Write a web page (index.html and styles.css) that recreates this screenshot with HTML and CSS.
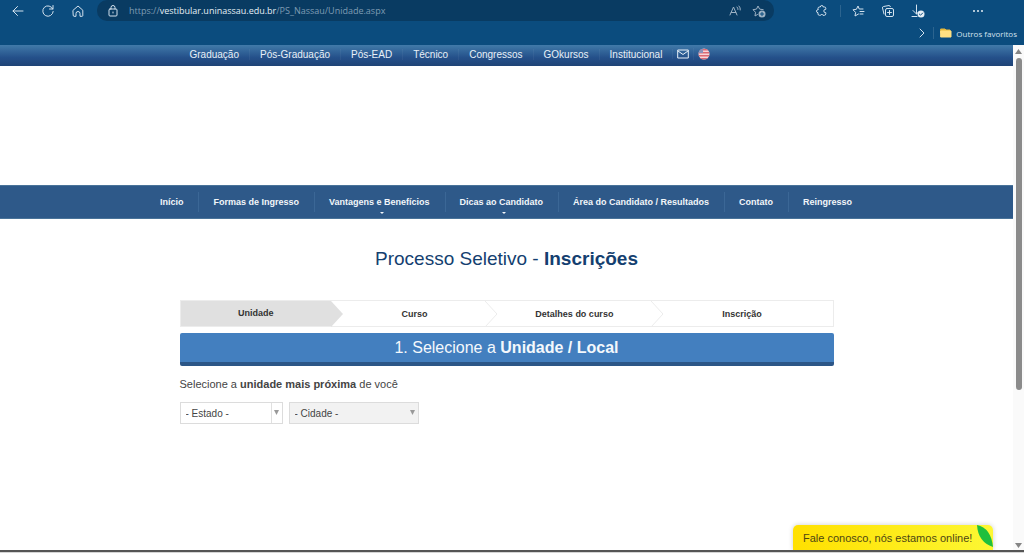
FILE: index.html
```html
<!DOCTYPE html>
<html lang="pt-BR">
<head>
<meta charset="utf-8">
<title>Processo Seletivo - Inscrições</title>
<link rel="stylesheet" href="styles.css">
</head>
<body>
<header class="browser">
  <div class="toolbar">
    <button class="tool back" aria-label="Voltar"><svg width="14" height="14" viewBox="0 0 14 14"><path d="M12 7H2M6.500 2.500 2 7l4.500 4.500"/></svg></button>
    <button class="tool reload" aria-label="Atualizar"><svg width="14" height="14" viewBox="0 0 14 14"><path d="M11.800 5A5.200 5.200 0 1 0 12.200 7.500M12 1.500V5H8.500"/></svg></button>
    <button class="tool home" aria-label="Início"><svg width="14" height="14" viewBox="0 0 14 14"><path d="M2.200 6.200 7 2l4.800 4.200v5.300q0 .8-.8.800H9V9.500a2 2 0 0 0-4 0v2.800H3q-.8 0-.8-.8z"/></svg></button>
    <div class="address">
      <svg class="lock" width="12" height="14" viewBox="0 0 12 14"><rect x="2" y="5" width="8" height="7" rx="1"/><path d="M4 5V3.500a2 2 0 0 1 4 0V5M6 8v1"/></svg>
      <span class="url">https://<b>vestibular.uninassau.edu.br</b>/PS_Nassau/Unidade.aspx</span>
      <button class="tool read" aria-label="Ler em voz alta"><svg width="14" height="14" viewBox="0 0 14 14"><path d="m2 11 3.500-8L9 11M3.200 8.500h4.600M9 3q1.200 1 1 2.500M11 2q1.700 1.700 1.300 4"/></svg></button>
      <button class="tool" aria-label="Favoritar"><svg width="14" height="14" viewBox="0 0 14 14"><path d="M5.500 10.500 3 12l.5-3.700L1 5.700l3.500-.6L6 2l1.600 3.100 3.600.6"/><circle class="fill" cx="10" cy="10" r="3.500"/><path class="cut" d="M8.300 10h3.400M10 8.300v3.400"/></svg></button>
    </div>
    <div class="extras">
      <button class="tool" aria-label="Extensões"><svg width="14" height="14" viewBox="0 0 14 14"><path d="M3 4.300q0-1.300 1.300-1.300h1q.1-1.500 1.500-1.500T8.300 3h1.200q1.300 0 1.300 1.300v1q-2-.1-2 1.700t2 1.700v1q0 1.600-1.400 1.600H8q0-.8-1.200-.8t-1.200.8H4.400Q3 11.300 3 9.900V8.700q-1.500-.1-1.500-1.600T3 5.500z"/></svg></button>
      <span class="divider"></span>
      <button class="tool" aria-label="Favoritos"><svg width="14" height="14" viewBox="0 0 14 14"><path d="M7.500 10 4 12l.6-3.600L2 5.800l3.400-.5L7 2l1.200 3H12M9 7.500h4M9 10h3"/></svg></button>
      <button class="tool" aria-label="Coleções"><svg width="14" height="14" viewBox="0 0 14 14"><rect x="4.500" y="4.500" width="8" height="8" rx="1.500"/><path d="M3 10 1.500 4q-.3-1.200 1-1.500L8 1.500q1 0 1.400 1.200M8.500 6.500v4M6.500 8.500h4"/></svg></button>
      <button class="tool" aria-label="Downloads"><svg width="14" height="14" viewBox="0 0 14 14"><path d="M5.500 1v9M2 6.500l3.500 3.500L8 7.500M1 12.500h5"/><circle class="fill" cx="10" cy="10" r="3.500"/><path class="cut" d="m8.300 10 1.200 1.200L11.700 9"/></svg></button>
      <button class="tool more" aria-label="Mais"><svg width="14" height="14" viewBox="0 0 14 14"><g class="fill"><circle cx="3" cy="7" r="1"/><circle cx="7" cy="7" r="1"/><circle cx="11" cy="7" r="1"/></g></svg></button>
    </div>
  </div>
  <div class="bookmarks">
    <button class="tool" aria-label="Mostrar mais"><svg width="10" height="10" viewBox="0 0 10 10"><path d="m3 1 4 4-4 4"/></svg></button>
    <span class="divider"></span>
    <button class="folder"><svg width="12" height="10" viewBox="0 0 12 10"><path class="tab" d="M1 1h4l1 1h4v3H1z"/><path class="pocket" d="M1 3h10v6H1z"/></svg>Outros favoritos</button>
  </div>
</header>
<div class="viewport">
  <div class="page">
    <nav class="topnav">
      <div class="container toplinks">
        <a href="#">Graduação</a><a href="#">Pós-Graduação</a><a href="#">Pós-EAD</a><a href="#">Técnico</a><a href="#">Congressos</a><a href="#">GOkursos</a><a href="#">Institucional</a>
        <a class="icon" href="#" aria-label="E-mail"><svg width="12" height="10" viewBox="0 0 12 10"><path d="M.7 1h10.600v8H.7zM1 2l5 3.500L11 2"/></svg></a>
        <a class="icon" href="#" aria-label="English"><svg width="12" height="12" viewBox="0 0 12 12"><clipPath id="disc"><circle cx="6" cy="6" r="5.500"/></clipPath><g clip-path="url(#disc)"><path class="white" d="M0 0h12v12H0z"/><path class="red" d="M0 1h12v1.400H0zM0 4h12v1.400H0zM0 7h12v1.400H0zM0 10h12v1.500H0z"/><path class="blue" d="M0 0h5v5H0z"/></g></svg></a>
      </div>
    </nav>
    <div class="banner"></div>
    <nav class="mainnav">
      <a href="#">Início</a><a href="#">Formas de Ingresso</a><a class="drop" href="#">Vantagens e Benefícios</a><a class="drop" href="#">Dicas ao Candidato</a><a href="#">Área do Candidato / Resultados</a><a href="#">Contato</a><a href="#">Reingresso</a>
    </nav>
    <main class="container">
      <h1 class="title">Processo Seletivo - <b>Inscrições</b></h1>
      <ol class="steps">
        <li class="current"><span>Unidade</span><svg width="13" height="26" viewBox="0 0 13 26"><path d="M0 0l12 13L0 26"/></svg></li>
        <li><span>Curso</span><svg width="13" height="26" viewBox="0 0 13 26"><path d="M0 0l12 13L0 26"/></svg></li>
        <li><span>Detalhes do curso</span><svg width="13" height="26" viewBox="0 0 13 26"><path d="M0 0l12 13L0 26"/></svg></li>
        <li class="last"><span>Inscrição</span></li>
      </ol>
      <h2 class="heading">1. Selecione a <b>Unidade / Local</b></h2>
      <form>
        <p class="hint">Selecione a <b>unidade mais próxima</b> de você</p>
        <div class="fields">
          <div class="field state"><select aria-label="Estado"><option>- Estado -</option></select><svg width="5" height="5" viewBox="0 0 5 5"><path d="M0 0h5L2.500 5z"/></svg></div>
          <div class="field city"><select aria-label="Cidade" disabled><option>- Cidade -</option></select><svg width="5" height="5" viewBox="0 0 5 5"><path d="M0 0h5L2.500 5z"/></svg></div>
        </div>
      </form>
    </main>
    <button class="chat">Fale conosco, nós estamos online!<svg width="16" height="22" viewBox="0 0 16 22"><path d="M0 0Q14 3 16 22 1 17 0 0z"/></svg></button>
  </div>
  <div class="scrollbar">
    <svg width="7" height="5" viewBox="0 0 7 5"><path d="M0 5 3.500 0 7 5z"/></svg>
    <div class="track"><div class="thumb"></div></div>
    <svg width="7" height="5" viewBox="0 0 7 5"><path d="M0 0h7L3.500 5z"/></svg>
  </div>
</div>
<footer class="edge"></footer>
</body>
</html>
```
FILE: styles.css
```css
* { box-sizing: border-box; }
body {
  margin: 0;
  height: 100vh;
  display: flex;
  flex-direction: column;
  background: #fff;
  font-family: "Liberation Sans", Arial, sans-serif;
  color: #333;
}
button { border: 0; padding: 0; background: none; color: inherit; font: inherit; }
a { color: inherit; text-decoration: none; }
svg { display: block; flex: none; }

.browser {
  height: 45px;
  flex: none;
  background: #0b4c7e;
  color: #d4e2ee;
  font-family: "Open Sans", "Noto Sans", sans-serif;
}
.browser svg { fill: none; stroke: currentColor; stroke-width: 1; stroke-linecap: round; stroke-linejoin: round; }
.browser .fill { fill: #e6eef5; stroke: none; }
.browser .cut { stroke: #0b4c7e; }
.toolbar { display: flex; height: 21px; align-items: center; padding-left: 11px; }
.tool { flex: none; }
.reload, .home { margin-left: 16px; }
.address {
  flex: 1;
  display: flex;
  align-items: center;
  height: 21px;
  margin-left: 12px;
  padding: 0 8px 0 10px;
  background: #093b62;
  border-radius: 10px;
  color: #9fb3c5;
  font-size: 9px;
}
.url { flex: 1; margin-left: 10px; color: #7f9bb3; white-space: nowrap; }
.url b { font-weight: 400; color: #e6eef5; }
.lock { color: #d4e2ee; }
.read { margin-right: 10px; }
.address .fill { fill: #9fb3c5; }
.extras { display: flex; align-items: center; gap: 16px; width: 250px; padding-left: 41px; }
.divider { width: 1px; height: 12px; background: #2c648f; }
.extras .divider { margin: 0 -6px 0 -5px; }
.more { margin-left: 30px; }
.bookmarks { display: flex; align-items: center; justify-content: flex-end; gap: 6px; height: 24px; padding-right: 7px; }
.folder { display: flex; align-items: center; gap: 4px; font-size: 8px; }
.browser .tab { fill: #e8b93a; stroke: #e8b93a; }
.browser .pocket { fill: #ffe082; stroke: #ffe082; }

.viewport { flex: 1; display: flex; min-height: 0; }
.page { flex: 1; position: relative; overflow: hidden; }
.container { max-width: 654px; margin: 0 auto; }
.topnav { height: 21px; background: linear-gradient(#417aa9, #24508a 60%, #1f4376); color: #e8f0f8; }
.toplinks { display: flex; align-items: center; height: 18px; font-size: 10px; }
.toplinks a { padding: 0 10px; border-left: 1px solid #ffffff0c; white-space: nowrap; }
.toplinks a:first-child { padding-left: 9px; border-color: transparent; }
.toplinks .icon { padding: 0 4px; }
.toplinks svg { fill: none; stroke: #e8f0f8; stroke-width: 1; }
.toplinks .white { fill: #f6d4d8; stroke: none; }
.toplinks .red { fill: #dc6973; stroke: none; }
.toplinks .blue { fill: #8a91ba; stroke: none; }
.banner { height: 119px; }
.mainnav {
  display: flex;
  justify-content: center;
  align-items: center;
  height: 34px;
  border-top: 1px solid #497399;
  border-bottom: 1px solid #497399;
  background: #2e5989;
  color: #f2f6fa;
  font-size: 9px;
  font-weight: 700;
}
.mainnav a { position: relative; padding: 0 15px 0 14px; line-height: 20px; white-space: nowrap; border-left: 1px solid #3b6796; }
.mainnav a:first-child { border-left: 0; }
.drop::after {
  content: "";
  position: absolute;
  left: 50%;
  bottom: -2px;
  border: 2px solid transparent;
  border-top-color: #f2f6fa;
  border-bottom: 0;
}
.title { margin: 27px 0 0; color: #143f70; font-size: 19px; line-height: 26px; font-weight: 400; text-align: center; }
.steps {
  display: grid;
  grid-template-columns: 164fr 154fr 166fr 169fr;
  margin: 28px 0 0;
  padding: 0;
  border: 1px solid #ececec;
  list-style: none;
  font-size: 9px;
  font-weight: 700;
}
.steps li { display: flex; align-items: center; height: 25px; }
.steps span { flex: 1; text-align: center; }
.steps svg { fill: #fff; stroke: #ececec; }
.steps .last { padding-right: 12px; }
.steps .current span { background: #e0e0e0; line-height: 25px; }
.steps .current svg { fill: #e0e0e0; stroke: none; }
.heading {
  margin: 6px 0 0;
  border-bottom: 4px solid #2c5687;
  border-radius: 2px;
  background: #437fbf;
  color: #f4f8fc;
  font-size: 16px;
  line-height: 29px;
  font-weight: 400;
  text-align: center;
}
.hint { margin: 10px 0 0; color: #444; font-size: 11px; line-height: 16px; }
.fields { display: flex; gap: 6px; margin-top: 10px; }
.field { position: relative; }
.field select {
  appearance: none;
  display: block;
  width: 100%;
  height: 22px;
  padding: 0 5px;
  border: 1px solid #dcdcdc;
  border-radius: 0;
  background: #fff;
  color: #444;
  font: 10px "Liberation Sans", Arial, sans-serif;
  opacity: 1;
}
.field svg { position: absolute; right: 4px; top: 8px; fill: #999; }
.state { width: 103px; }
.state select { background: linear-gradient(#e0e0e0, #e0e0e0) right 10px top / 1px 100% no-repeat #fff; }
.city { width: 130px; }
.city select { background: #f2f2f2; }
.chat {
  position: absolute;
  right: 20px;
  bottom: 0;
  display: flex;
  justify-content: space-between;
  width: 200px;
  height: 25px;
  padding-left: 10px;
  border-radius: 5px 5px 0 0;
  background: linear-gradient(90deg, #ffe000, #fdf733);
  box-shadow: 0 0 5px #0003;
  color: #4d4614;
  font-size: 11px;
  line-height: 26px;
  white-space: nowrap;
}
.chat svg { fill: #1fbf3d; }
.scrollbar { display: flex; flex-direction: column; align-items: center; gap: 4px; width: 11px; padding: 4px 0 2px; background: #fafafa; }
.scrollbar svg { fill: #858585; }
.track { flex: 1; align-self: stretch; padding: 0 2px 0 3px; }
.thumb { height: 69%; border-radius: 3px; background: #8b8b8b; }
.edge { flex: none; height: 3px; border-top: 2px solid #555; background: #d5d5d5; }
```
